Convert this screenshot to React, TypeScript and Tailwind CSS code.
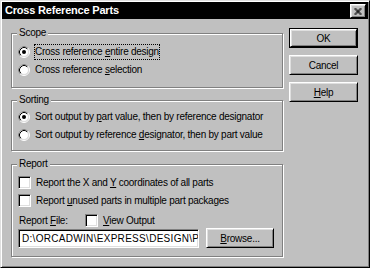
import type { ReactNode } from 'react'

const raised =
    'bg-[#c0c0c0] border border-t-white border-l-white border-r-black border-b-black shadow-[inset_1px_1px_0_#dfdfdf,inset_-1px_-1px_0_#808080]'
const etched = 'border border-[#808080] shadow-[inset_1px_1px_0_#fff,1px_1px_0_#fff]'
const sunken =
    'bg-white border border-t-[#808080] border-l-[#808080] border-r-white border-b-white shadow-[inset_1px_1px_0_#000,inset_-1px_-1px_0_#dfdfdf]'

function Radio({ checked }: { checked?: boolean }) {
    return (
        <svg width="12" height="12" viewBox="0 0 12 12" className="shrink-0">
            <circle cx="6" cy="6" r="5.5" fill="none" stroke="#fff" />
            <path d="M2.11 9.89 A5.5 5.5 0 0 1 9.89 2.11" fill="none" stroke="#808080" />
            <circle cx="6" cy="6" r="4.5" fill="#fff" stroke="#dfdfdf" />
            <path d="M2.82 9.18 A4.5 4.5 0 0 1 9.18 2.82" fill="none" stroke="#000" />
            {checked && <circle cx="6" cy="6" r="2" fill="#000" />}
        </svg>
    )
}

function Check() {
    return <span className={`block w-[13px] h-[13px] shrink-0 ${sunken}`} />
}

function Option({ children, checked, focus }: { children: ReactNode; checked?: boolean; focus?: boolean }) {
    return (
        <div className="flex items-center h-[18px] pl-[6px]">
            <Radio checked={checked} />
            <span className={`ml-[4px] leading-[14px] border ${focus ? 'border-dotted border-black' : 'border-transparent'}`}>
                {children}
            </span>
        </div>
    )
}

function CheckRow({ children }: { children: ReactNode }) {
    return (
        <div className="flex items-center h-[18px] pl-[6px]">
            <Check />
            <span className="ml-[5px]">{children}</span>
        </div>
    )
}

function Group({ title, className, children }: { title: string; className: string; children: ReactNode }) {
    return (
        <div className={`flex flex-col ${etched} ${className}`}>
            <span className="-mt-[7px] ml-[5px] px-[2px] self-start h-[12px] leading-[12px] bg-[#c0c0c0]">{title}</span>
            {children}
        </div>
    )
}

function Button({ children, main }: { children: ReactNode; main?: boolean }) {
    const face = `${raised} flex items-center justify-center`
    if (main)
        return (
            <div className="h-[20px] border border-black flex">
                <div className={`${face} flex-1`}>{children}</div>
            </div>
        )
    return <div className={`${face} h-[20px]`}>{children}</div>
}

export default function App() {
    return (
        <div className="w-[370px] h-[268px] overflow-hidden bg-[#c0c0c0] border border-t-[#dfdfdf] border-l-[#dfdfdf] border-r-black border-b-black shadow-[inset_1px_1px_0_#fff,inset_-1px_-1px_0_#808080] p-px font-['Liberation_Sans',Arial,sans-serif] text-[10px] tracking-[-0.25px] text-black">
            <div className="h-[17px] bg-black flex items-start justify-between pl-[3px] pr-[2px]">
                <span className="text-white font-bold text-[11px] leading-[17px] tracking-[-0.2px]">Cross Reference Parts</span>
                <div className={`${raised} mt-[2px] w-[16px] h-[14px] flex items-center justify-center`}>
                    <svg width="8" height="7" viewBox="0 0 8 7">
                        <path d="M0.5 0 L7.5 7 M1.5 0 L7.5 6 M0.5 1 L6.5 7 M7.5 0 L0.5 7 M6.5 0 L0.5 6 M7.5 1 L1.5 7" stroke="#000" strokeWidth="0.7" />
                    </svg>
                </div>
            </div>

            <div className="flex pl-[9px]">
                <div className="w-[272px] flex flex-col">
                    <Group title="Scope" className="mt-[14px] pb-[8px]">
                        <div className="mt-[4px]" />
                        <Option checked focus>
                            Cross reference <u>e</u>ntire design
                        </Option>
                        <Option>
                            Cross reference <u>s</u>election
                        </Option>
                    </Group>

                    <Group title="Sorting" className="mt-[12px] pb-[6px]">
                        <div className="mt-[2px]" />
                        <Option checked>
                            Sort output by <u>p</u>art value, then by reference designator
                        </Option>
                        <Option>
                            Sort output by reference <u>d</u>esignator, then by part value
                        </Option>
                    </Group>

                    <Group title="Report" className="mt-[13px] pb-[8px]">
                        <div className="mt-[3px]" />
                        <CheckRow>
                            Report the X and <u>Y</u> coordinates of all parts
                        </CheckRow>
                        <CheckRow>
                            Report <u>u</u>nused parts in multiple part packages
                        </CheckRow>
                        <div className="mt-[3px] h-[16px] flex items-center pl-[7px]">
                            <span className="w-[66px]">
                                Report <u>F</u>ile:
                            </span>
                            <Check />
                            <span className="ml-[5px]">
                                <u>V</u>iew Output
                            </span>
                        </div>
                        <div className="flex items-start pl-[6px]">
                            <input
                                readOnly
                                value="D:\ORCADWIN\EXPRESS\DESIGN\PARTS.XRF"
                                className={`${sunken} mt-[1px] w-[181px] h-[19px] pl-[3px] outline-none text-[10px] tracking-[0.3px]`}
                            />
                            <div className="ml-[7px] w-[68px]">
                                <Button>
                                    <u>B</u>rowse...
                                </Button>
                            </div>
                        </div>
                    </Group>
                </div>

                <div className="ml-[6px] w-[69px] mt-[9px] flex flex-col gap-[7px]">
                    <Button main>OK</Button>
                    <Button>Cancel</Button>
                    <Button>
                        <u>H</u>elp
                    </Button>
                </div>
            </div>
        </div>
    )
}
